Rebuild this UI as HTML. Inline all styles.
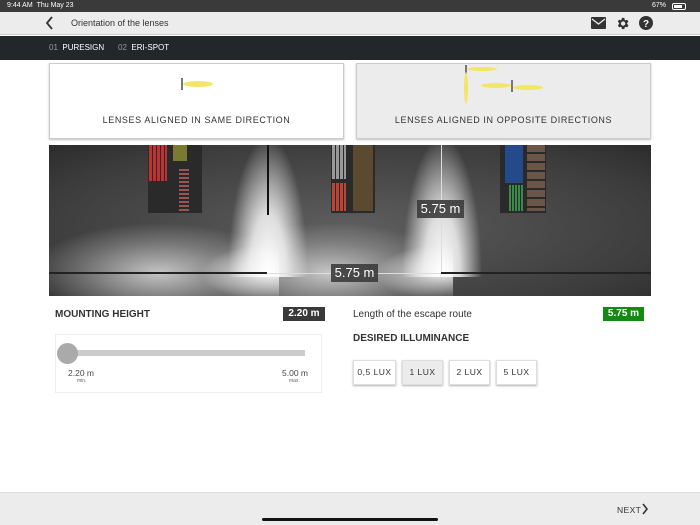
<!DOCTYPE html>
<html><head><meta charset="utf-8"><style>
*{margin:0;padding:0;box-sizing:border-box}
body{width:700px;height:525px;overflow:hidden;background:#fff;font-family:"Liberation Sans",sans-serif;position:relative;color:#333}
.abs{position:absolute}
</style></head><body>
<div class="abs" style="left:0;top:0;width:700px;height:12px;background:#3a3a3a;color:#fff;font-size:7px;line-height:12px">
 <span class="abs" style="left:7px">9:44 AM&nbsp;&nbsp;Thu May 23</span>
 <span class="abs" style="left:652px">67%</span>
 <span class="abs" style="left:672px;top:3px;width:14px;height:7px;border:1px solid #fff;border-radius:2px"><span class="abs" style="left:1px;top:1px;width:8px;height:3px;background:#fff"></span></span>
</div>
<div class="abs" style="left:0;top:12px;width:700px;height:23px;background:#ececec;border-bottom:1px solid #ccc">
 <svg class="abs" style="left:45px;top:4px" width="10" height="14"><path d="M7 1L2 7L7 13" stroke="#333" stroke-width="1.8" fill="none"/></svg>
 <span class="abs" style="left:71px;top:6px;font-size:9px;color:#333">Orientation of the lenses</span>
 <svg class="abs" style="left:591px;top:5px" width="15" height="12"><rect width="15" height="12" rx="1" fill="#333"/><path d="M1 2L7.5 7L14 2" stroke="#ececec" stroke-width="1.3" fill="none"/></svg>
 <svg class="abs" style="left:615px;top:4px" width="15" height="15" viewBox="0 0 24 24"><path fill="#333" d="M19.4 13a7.5 7.5 0 000-2l2.1-1.6-2-3.5-2.5 1a7.5 7.5 0 00-1.7-1L15 3h-4l-.4 2.8a7.5 7.5 0 00-1.7 1l-2.5-1-2 3.5L6.6 11a7.5 7.5 0 000 2l-2.1 1.6 2 3.5 2.5-1a7.5 7.5 0 001.7 1L11 21h4l.4-2.8a7.5 7.5 0 001.7-1l2.5 1 2-3.5zM13 15.5a3.5 3.5 0 110-7 3.5 3.5 0 010 7z"/></svg>
 <svg class="abs" style="left:639px;top:4px" width="14" height="14"><circle cx="7" cy="7" r="7" fill="#333"/><text x="7" y="11" font-size="10" font-weight="bold" fill="#fff" text-anchor="middle" font-family="Liberation Sans">?</text></svg>
</div>
<div class="abs" style="left:0;top:36px;width:700px;height:24px;background:#23272a;font-size:8px;line-height:24px;color:#fff">
 <span class="abs" style="left:49px"><span style="color:#999">01</span>&nbsp; PURESIGN</span>
 <span class="abs" style="left:118px"><span style="color:#999">02</span>&nbsp; ERI-SPOT</span>
</div>
<div class="abs" style="left:49px;top:63px;width:295px;height:76px;background:#fff;border:1px solid #ccc;box-shadow:0 1px 2px rgba(0,0,0,.25)">
 <div class="abs" style="left:131px;top:14px;width:2px;height:12px;background:#777"></div>
 <div class="abs" style="left:133px;top:17px;width:30px;height:6px;background:#f1e66a;border-radius:50%"></div>
 <div class="abs" style="left:0;top:51px;width:100%;text-align:center;font-size:9px;letter-spacing:.6px;color:#333">LENSES ALIGNED IN SAME DIRECTION</div>
</div>
<div class="abs" style="left:356px;top:63px;width:295px;height:76px;background:#ececec;border:1px solid #ccc;box-shadow:0 1px 2px rgba(0,0,0,.25)">
 <div class="abs" style="left:108px;top:1px;width:2px;height:10px;background:#777"></div>
 <div class="abs" style="left:110px;top:3px;width:30px;height:4px;background:#f1e66a;border-radius:50%"></div>
 <div class="abs" style="left:107px;top:8px;width:4px;height:32px;background:#f1e66a;border-radius:50%"></div>
 <div class="abs" style="left:124px;top:19px;width:30px;height:5px;background:#f1e66a;border-radius:50%"></div>
 <div class="abs" style="left:154px;top:16px;width:2px;height:12px;background:#777"></div>
 <div class="abs" style="left:156px;top:21px;width:30px;height:5px;background:#f1e66a;border-radius:50%"></div>
 <div class="abs" style="left:0;top:51px;width:100%;text-align:center;font-size:9px;letter-spacing:.6px;color:#333">LENSES ALIGNED IN OPPOSITE DIRECTIONS</div>
</div>
<div class="abs" style="left:49px;top:145px;width:602px;height:151px;overflow:hidden;background:radial-gradient(ellipse at 50% 55%,#5e5e5e,#3c3c3c 75%,#2c2c2c)">
 <div class="abs" style="left:-20px;top:78px;width:260px;height:100px;background:radial-gradient(closest-side,rgba(240,240,240,.75),rgba(200,200,200,.35) 60%,rgba(200,200,200,0))"></div>
 <div class="abs" style="left:150px;top:78px;width:260px;height:100px;background:radial-gradient(closest-side,rgba(240,240,240,.75),rgba(200,200,200,.35) 60%,rgba(200,200,200,0))"></div>
 <div class="abs" style="left:120px;top:100px;width:110px;height:56px;background:radial-gradient(ellipse 60% 50% at 90% 50%,rgba(255,255,255,.9),rgba(255,255,255,0))"></div>
 <div class="abs" style="left:294px;top:100px;width:110px;height:56px;background:radial-gradient(ellipse 60% 50% at 90% 50%,rgba(255,255,255,.9),rgba(255,255,255,0))"></div>
 <div class="abs" style="left:179px;top:-10px;width:80px;height:142px;background:radial-gradient(ellipse 40px 140px at 50% 100%,#fff,rgba(245,245,245,.85) 45%,rgba(200,200,200,0))"></div>
 <div class="abs" style="left:353px;top:-10px;width:80px;height:142px;background:radial-gradient(ellipse 40px 140px at 50% 100%,#fff,rgba(245,245,245,.85) 45%,rgba(200,200,200,0))"></div>
 <div class="abs" style="left:99px;top:0;width:54px;height:68px;background:#2a2a2a"></div>
 <div class="abs" style="left:100px;top:0;width:18px;height:36px;background:repeating-linear-gradient(90deg,#b33 0 3px,#2a2a2a 3px 4px)"></div>
 <div class="abs" style="left:124px;top:0;width:14px;height:16px;background:#7a7a30"></div>
 <div class="abs" style="left:130px;top:24px;width:10px;height:42px;background:repeating-linear-gradient(#955 0 2px,#2a2a2a 2px 4px)"></div>
 <div class="abs" style="left:282px;top:0;width:44px;height:68px;background:#2a2a2a"></div>
 <div class="abs" style="left:283px;top:0;width:14px;height:34px;background:repeating-linear-gradient(90deg,#999 0 3px,#2a2a2a 3px 4px)"></div>
 <div class="abs" style="left:283px;top:38px;width:14px;height:28px;background:repeating-linear-gradient(90deg,#b43 0 3px,#2a2a2a 3px 4px)"></div>
 <div class="abs" style="left:304px;top:0;width:20px;height:66px;background:#5a4a30"></div>
 <div class="abs" style="left:451px;top:0;width:46px;height:68px;background:#2a2a2a"></div>
 <div class="abs" style="left:456px;top:0;width:18px;height:38px;background:#234a8a"></div>
 <div class="abs" style="left:460px;top:40px;width:14px;height:26px;background:repeating-linear-gradient(90deg,#3a8a4a 0 2px,#2a2a2a 2px 3px)"></div>
 <div class="abs" style="left:478px;top:0;width:18px;height:66px;background:repeating-linear-gradient(#6a5548 0 7px,#2a2a2a 7px 9px)"></div>
 <div class="abs" style="left:218px;top:0;width:2px;height:70px;background:#111"></div>
 <div class="abs" style="left:392px;top:0;width:1px;height:128px;background:#ddd"></div>
 <div class="abs" style="left:0;top:127px;width:218px;height:2px;background:#222"></div>
 <div class="abs" style="left:392px;top:127px;width:210px;height:2px;background:#222"></div>
 <div class="abs" style="left:219px;top:128px;width:173px;height:1px;background:#ddd"></div>
 <div class="abs" style="left:368px;top:55px;width:47px;height:18px;background:rgba(60,60,60,.9);color:#fff;font-size:13px;line-height:18px;text-align:center">5.75 m</div>
 <div class="abs" style="left:282px;top:119px;width:47px;height:18px;background:rgba(60,60,60,.9);color:#fff;font-size:13px;line-height:18px;text-align:center">5.75 m</div>
</div>
<div class="abs" style="left:55px;top:309px;font-size:10px;font-weight:bold;color:#333">MOUNTING HEIGHT</div>
<div class="abs" style="left:283px;top:307px;width:42px;height:14px;background:#3a3a3a;color:#fff;font-size:10px;font-weight:bold;line-height:14px;text-align:center">2.20 m</div>
<div class="abs" style="left:55px;top:334px;width:267px;height:59px;border:1px solid #eee"></div>
<div class="abs" style="left:63px;top:350px;width:242px;height:6px;background:#ccc"></div>
<div class="abs" style="left:57px;top:343px;width:21px;height:21px;border-radius:50%;background:#aaa"></div>
<div class="abs" style="left:68px;top:368px;font-size:8.5px;color:#444">2.20 m</div>
<div class="abs" style="left:77px;top:378px;font-size:5px;color:#666">min.</div>
<div class="abs" style="left:282px;top:368px;font-size:8.5px;color:#444">5.00 m</div>
<div class="abs" style="left:289px;top:378px;font-size:5px;color:#666">max.</div>
<div class="abs" style="left:353px;top:309px;font-size:10px;color:#333">Length of the escape route</div>
<div class="abs" style="left:603px;top:307px;width:41px;height:14px;background:#138a13;color:#fff;font-size:10px;font-weight:bold;line-height:14px;text-align:center">5.75 m</div>
<div class="abs" style="left:353px;top:333px;font-size:10px;font-weight:bold;color:#333">DESIRED ILLUMINANCE</div>
<div class="abs" style="left:353px;top:360px;width:43px;height:25px;background:#fff;border:1px solid #ddd;box-shadow:0 1px 2px rgba(0,0,0,.3);font-size:8.5px;line-height:23px;text-align:center;letter-spacing:.5px">0,5 LUX</div>
<div class="abs" style="left:402px;top:360px;width:41px;height:25px;background:#ececec;border:1px solid #ddd;box-shadow:0 1px 2px rgba(0,0,0,.3);font-size:8.5px;line-height:23px;text-align:center;letter-spacing:.5px">1 LUX</div>
<div class="abs" style="left:449px;top:360px;width:41px;height:25px;background:#fff;border:1px solid #ddd;box-shadow:0 1px 2px rgba(0,0,0,.3);font-size:8.5px;line-height:23px;text-align:center;letter-spacing:.5px">2 LUX</div>
<div class="abs" style="left:496px;top:360px;width:41px;height:25px;background:#fff;border:1px solid #ddd;box-shadow:0 1px 2px rgba(0,0,0,.3);font-size:8.5px;line-height:23px;text-align:center;letter-spacing:.5px">5 LUX</div>
<div class="abs" style="left:0;top:492px;width:700px;height:33px;background:#ececec;border-top:1px solid #ddd">
 <span class="abs" style="left:617px;top:12px;font-size:8.5px;color:#333;letter-spacing:.4px">NEXT</span>
 <svg class="abs" style="left:641px;top:10px" width="8" height="12"><path d="M2 1L6 6L2 11" stroke="#333" stroke-width="1.6" fill="none"/></svg>
 <div class="abs" style="left:262px;top:25px;width:176px;height:3px;border-radius:2px;background:#111"></div>
</div>
</body></html>
